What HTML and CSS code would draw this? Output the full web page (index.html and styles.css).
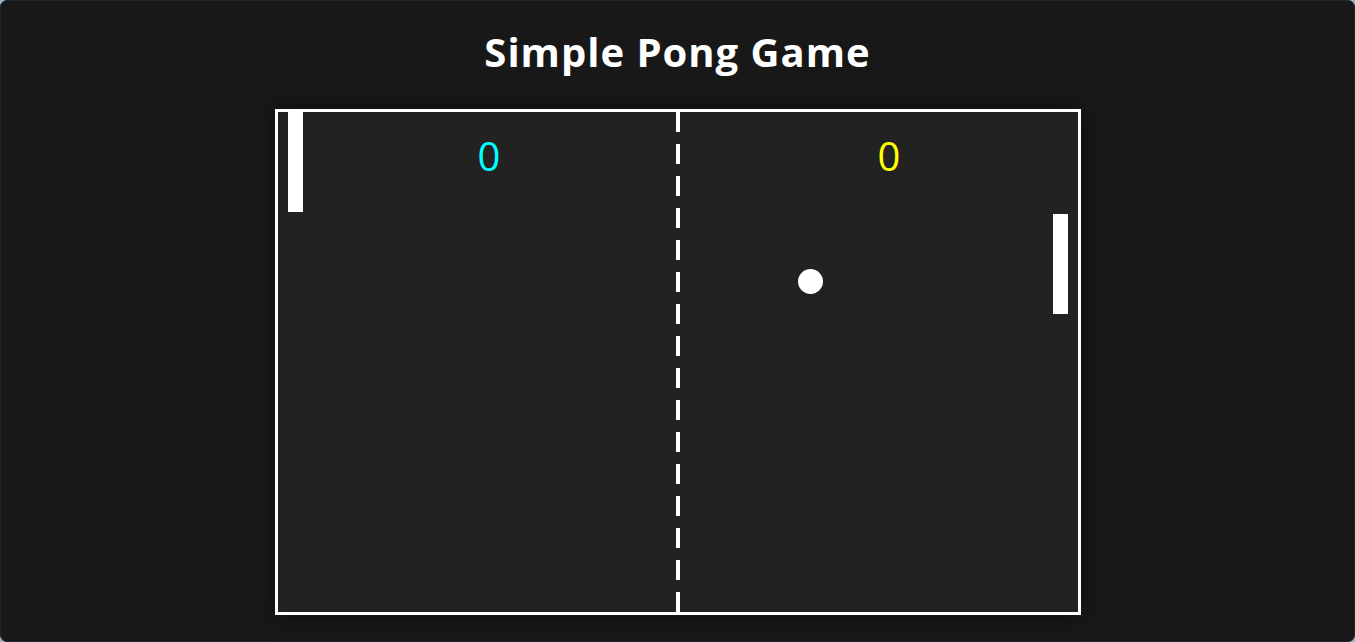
FILE: index.html
```html
<!DOCTYPE html>
<html lang="en">
<head>
<meta charset="utf-8">
<title>Simple Pong Game</title>
<link rel="stylesheet" href="styles.css">
</head>
<body>
<div class="app">
  <h1 class="title">Simple Pong Game</h1>
  <div class="court">
    <div class="net"></div>
    <span class="score score-left">0</span>
    <span class="score score-right">0</span>
    <div class="paddle paddle-left"></div>
    <div class="paddle paddle-right"></div>
    <div class="ball"></div>
  </div>
</div>
</body>
</html>
```
FILE: styles.css
```css
html {
  background: #9ab4c2;
}
body {
  margin: 0;
  font-family: "Open Sans", "Noto Sans", "DejaVu Sans", sans-serif;
}
.app {
  box-sizing: border-box;
  height: 100vh;
  background: #181818;
  border: 1px solid #1d2529;
  border-radius: 7px;
  display: flex;
  flex-direction: column;
  align-items: center;
  padding-top: 27px;
}
.title {
  margin: 0 0 33px;
  color: #ffffff;
  font-size: 40px;
  line-height: 48px;
  font-weight: 700;
  letter-spacing: 1px;
}
.court {
  position: relative;
  width: 800px;
  height: 500px;
  border: 3px solid #ffffff;
  background: #222222;
  box-shadow: 0 0 20px rgba(0, 0, 0, 0.5);
  flex: none;
}
.net {
  position: absolute;
  left: 398px;
  top: 0;
  width: 4px;
  height: 500px;
  background: repeating-linear-gradient(to bottom, #ffffff 0 20px, transparent 20px 32px);
}
.score {
  position: absolute;
  top: 24px;
  font-size: 40px;
  line-height: 40px;
  font-weight: 400;
}
.score-left {
  left: 200px;
  color: #00ffff;
}
.score-right {
  left: 600px;
  color: #ffff00;
}
.paddle {
  position: absolute;
  width: 15px;
  height: 100px;
  background: #ffffff;
}
.paddle-left {
  left: 10px;
  top: 0;
}
.paddle-right {
  left: 775px;
  top: 102px;
}
.ball {
  position: absolute;
  left: 520px;
  top: 157px;
  width: 25px;
  height: 25px;
  border-radius: 50%;
  background: #ffffff;
}
```
